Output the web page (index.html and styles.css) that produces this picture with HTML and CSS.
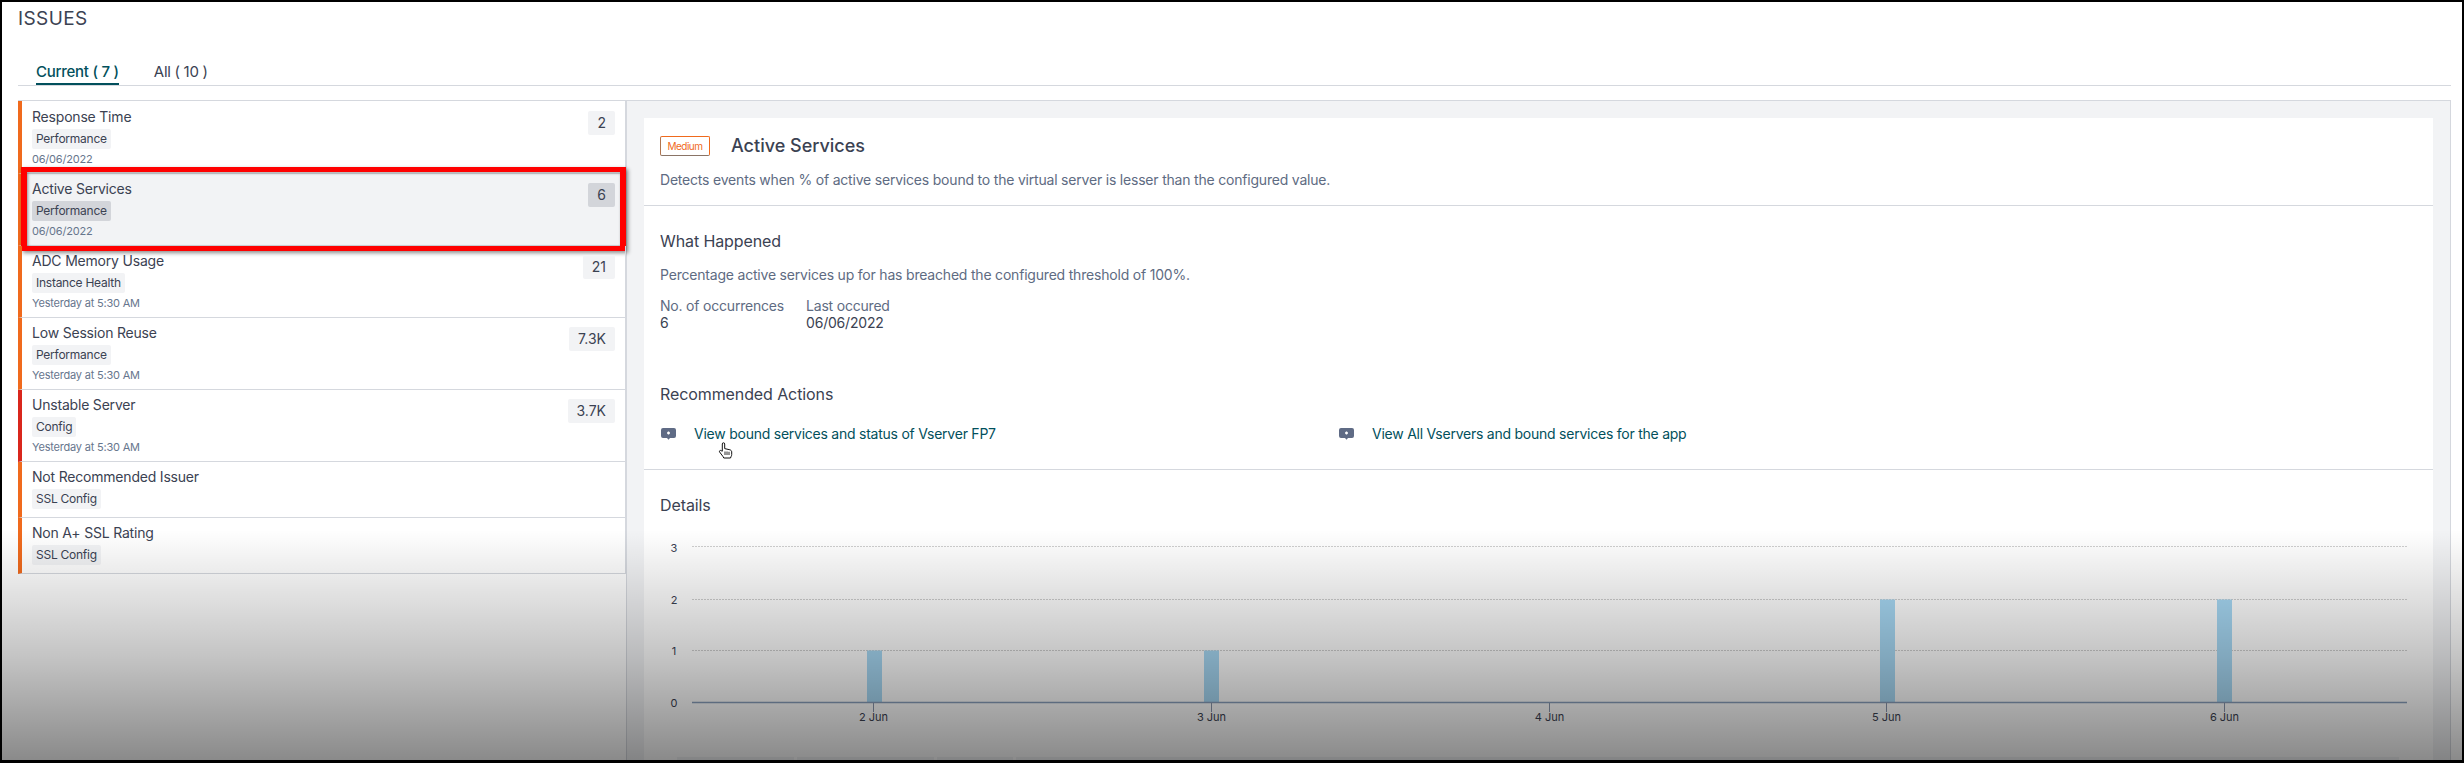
FILE: index.html
```html
<!DOCTYPE html>
<html lang="en">
<head>
  <meta charset="UTF-8" />
  <title>Issues</title>
  <link rel="stylesheet" href="styles.css">
</head>
<body>
  <div class="page">
    <h1 class="page-title">ISSUES</h1>

    <div class="tabs">
      <a class="tab tab-active">Current ( 7 )</a>
      <a class="tab">All ( 10 )</a>
    </div>

    <div class="content">
      <!-- issue list -->
      <ul class="issue-list">
        <li class="issue issue-orange">
          <div class="issue-text">
            <div class="issue-name">Response Time</div>
            <span class="tag">Performance</span>
            <div class="issue-date">06/06/2022</div>
          </div>
          <span class="count">2</span>
        </li>
        <li class="issue issue-orange issue-active">
          <div class="issue-text">
            <div class="issue-name">Active Services</div>
            <span class="tag">Performance</span>
            <div class="issue-date">06/06/2022</div>
          </div>
          <span class="count">6</span>
          <div class="callout"></div>
        </li>
        <li class="issue issue-orange">
          <div class="issue-text">
            <div class="issue-name">ADC Memory Usage</div>
            <span class="tag">Instance Health</span>
            <div class="issue-date">Yesterday at 5:30 AM</div>
          </div>
          <span class="count">21</span>
        </li>
        <li class="issue issue-orange">
          <div class="issue-text">
            <div class="issue-name">Low Session Reuse</div>
            <span class="tag">Performance</span>
            <div class="issue-date">Yesterday at 5:30 AM</div>
          </div>
          <span class="count">7.3K</span>
        </li>
        <li class="issue issue-red">
          <div class="issue-text">
            <div class="issue-name">Unstable Server</div>
            <span class="tag">Config</span>
            <div class="issue-date">Yesterday at 5:30 AM</div>
          </div>
          <span class="count">3.7K</span>
        </li>
        <li class="issue issue-orange issue-short">
          <div class="issue-text">
            <div class="issue-name">Not Recommended Issuer</div>
            <span class="tag">SSL Config</span>
          </div>
        </li>
        <li class="issue issue-orange issue-short">
          <div class="issue-text">
            <div class="issue-name">Non A+ SSL Rating</div>
            <span class="tag">SSL Config</span>
          </div>
        </li>
      </ul>

      <!-- detail panel -->
      <div class="panel">
        <div class="card">
          <section class="section section-head">
            <div class="head-row">
              <span class="severity">Medium</span>
              <h2 class="detail-title">Active Services</h2>
            </div>
            <p class="muted desc">Detects events when % of active services bound to the virtual server is lesser than the configured value.</p>
          </section>

          <section class="section section-body">
            <h3 class="section-title">What Happened</h3>
            <p class="muted happened">Percentage active services up for has breached the configured threshold of 100%.</p>
            <div class="facts">
              <div class="fact">
                <div class="fact-label">No. of occurrences</div>
                <div class="fact-value">6</div>
              </div>
              <div class="fact">
                <div class="fact-label">Last occured</div>
                <div class="fact-value">06/06/2022</div>
              </div>
            </div>

            <h3 class="section-title actions-title">Recommended Actions</h3>
            <div class="actions">
              <div class="action">
                <svg class="action-icon" viewBox="0 0 15 12"><path d="M2 0h11a2 2 0 0 1 2 2v6a2 2 0 0 1-2 2H9l-1.500 1.800L6 10H2a2 2 0 0 1-2-2V2a2 2 0 0 1 2-2z" fill="#5f6b85"/><path d="M6 5h3M7.500 3.500v3" stroke="#fff" stroke-width="1.300"/></svg>
                <a class="action-link">View bound services and status of Vserver FP7</a>
                <svg class="hand" viewBox="0 0 15 17">
                  <path d="M4.300 9.200V2a1.200 1.200 0 0 1 2.400 0v4.600l5.200 1.200c1.100.3 1.800 1.100 1.800 2.200v2.600c0 .8-.3 1.500-.7 2.100l-.5 1.300H5.800l-.9-1.600L1.600 10c-.7-1 .7-2.200 1.600-1.300z" fill="#fff" stroke="#111" stroke-width="1"/>
                  <path d="M7 9.500v3.500M9 9.500v3.500M11 9.800v3.200" stroke="#111" stroke-width=".9"/>
                </svg>
              </div>
              <div class="action">
                <svg class="action-icon" viewBox="0 0 15 12"><path d="M2 0h11a2 2 0 0 1 2 2v6a2 2 0 0 1-2 2H9l-1.500 1.800L6 10H2a2 2 0 0 1-2-2V2a2 2 0 0 1 2-2z" fill="#5f6b85"/><path d="M6 5h3M7.500 3.500v3" stroke="#fff" stroke-width="1.300"/></svg>
                <a class="action-link">View All Vservers and bound services for the app</a>
              </div>
            </div>
          </section>

          <section class="section section-details">
            <h3 class="section-title">Details</h3>
            <svg class="chart" viewBox="0 0 1757 190" width="1757" height="190">
              <g class="grid">
                <line x1="32" x2="1747" y1="6.500" y2="6.500"/>
                <line x1="32" x2="1747" y1="59.500" y2="59.500"/>
                <line x1="32" x2="1747" y1="110.500" y2="110.500"/>
              </g>
              <g class="bars">
                <rect x="207" y="110.500" width="15" height="52"/>
                <rect x="544" y="110.500" width="15" height="52"/>
                <rect x="1220" y="59.500" width="15" height="103"/>
                <rect x="1557" y="59.500" width="15" height="103"/>
              </g>
              <line class="axis" x1="32" x2="1747" y1="162.500" y2="162.500"/>
              <g class="ticks">
                <line x1="213.500" x2="213.500" y1="163" y2="172"/>
                <line x1="551.500" x2="551.500" y1="163" y2="172"/>
                <line x1="889.500" x2="889.500" y1="163" y2="172"/>
                <line x1="1226.500" x2="1226.500" y1="163" y2="172"/>
                <line x1="1564.500" x2="1564.500" y1="163" y2="172"/>
              </g>
              <g class="y-labels">
                <text x="14" y="12">3</text>
                <text x="14" y="64">2</text>
                <text x="14" y="115">1</text>
                <text x="14" y="167">0</text>
              </g>
              <g class="x-labels">
                <text x="213.500" y="181">2 Jun</text>
                <text x="551.500" y="181">3 Jun</text>
                <text x="889.500" y="181">4 Jun</text>
                <text x="1226.500" y="181">5 Jun</text>
                <text x="1564.500" y="181">6 Jun</text>
              </g>
            </svg>
            <div class="table-head">
              <span class="head-cell head-a"></span>
              <span class="head-cell head-b"></span>
              <span class="head-cell head-c"></span>
              <span class="head-cell head-d"></span>
            </div>
          </section>
        </div>
      </div>
    </div>
  </div>
  <div class="fade"></div>
</body>
</html>
```

FILE: styles.css
```css
* {
  box-sizing: border-box;
}
html, body {
  margin: 0;
  height: 763px;
  overflow: hidden;
}
body {
  position: relative;
  font-family: Inter, "Liberation Sans", sans-serif;
  color: #3b4252;
  background: #fff;
}
.page {
  height: 763px;
  border: 2px solid #000;
  border-bottom-width: 3px;
  background: #fff;
  display: flex;
  flex-direction: column;
  overflow: hidden;
}
.page-title {
  margin: 6px 0 0 16px;
  font-size: 19px;
  line-height: 22px;
  letter-spacing: 0.4px;
  font-weight: 400;
}

/* tabs */
.tabs {
  display: flex;
  gap: 35px;
  margin: 32px 11px 0 16px;
  padding-left: 18px;
  height: 24px;
  border-bottom: 1px solid #d5d8de;
}
.tab {
  font-size: 15px;
  line-height: 20px;
  height: 23px;
  letter-spacing: -0.3px;
  color: #3b4252;
}
.tab-active {
  color: #02505c;
  font-weight: 500;
  letter-spacing: -0.25px;
  border-bottom: 2px solid #02505c;
}

/* list + panel */
.content {
  display: flex;
  flex: 1;
  min-height: 0;
  margin: 14px 11px 0 16px;
}
.issue-list {
  list-style: none;
  margin: 0;
  padding: 0;
  width: 608px;
  flex: none;
  align-self: flex-start;
  border-top: 1px solid #d5d8de;
}
.issue {
  position: relative;
  display: flex;
  justify-content: space-between;
  height: 72px;
  padding: 5px 10px 0 10px;
  border-left: 4px solid #f06a1d;
  border-right: 1px solid #d5d8de;
  border-bottom: 1px solid #d5d8de;
}
.issue:first-child {
  height: 73px;
  padding-top: 6px;
}
.issue-red {
  border-left-color: #d9261c;
}
.issue-short {
  height: 56px;
}
.issue-active {
  background: #f2f3f5;
}
.issue-name {
  font-size: 14px;
  line-height: 20px;
  letter-spacing: -0.2px;
  color: #3b4252;
}
.tag {
  display: block;
  width: fit-content;
  margin-top: 2px;
  height: 20px;
  padding: 0 4px;
  font-size: 12px;
  line-height: 20px;
  letter-spacing: -0.25px;
  color: #3b4252;
  background: #f2f3f5;
  border-radius: 2px;
}
.issue-active .tag {
  background: #d3d5da;
}
.issue-date {
  margin-top: 2px;
  font-size: 11px;
  line-height: 16px;
  letter-spacing: -0.2px;
  color: #67768d;
}
.count {
  align-self: flex-start;
  margin-top: 4px;
  height: 24px;
  min-width: 25px;
  padding: 0 9px;
  font-size: 14px;
  line-height: 24px;
  text-align: center;
  background: #f2f3f5;
  border-radius: 2px;
}
.issue-active .count {
  background: #d3d5da;
}
/* red box drawn on top of the selected row */
.callout {
  position: absolute;
  left: -1px;
  right: -1px;
  top: -7px;
  bottom: -6px;
  border-style: solid;
  border-color: #f00;
  border-width: 5px 6px;
  box-shadow: 2px 2px 4px rgba(0, 0, 0, 0.45), inset 1px 1px 3px rgba(0, 0, 0, 0.4);
  pointer-events: none;
}

.panel {
  flex: 1;
  min-width: 0;
  display: flex;
  padding: 17px 17px 0 17px;
  background: #f2f3f5;
  border: 1px solid #d5d8de;
  border-bottom: 0;
}
.card {
  flex: 1;
  min-width: 0;
  background: #fff;
  overflow: hidden;
}
.section {
  padding: 0 16px;
  border-bottom: 1px solid #d5d8de;
}
.section-head {
  height: 88px;
  padding-top: 18px;
}
.head-row {
  display: flex;
  align-items: center;
}
.severity {
  width: 50px;
  height: 20px;
  border: 1px solid #f06a1d;
  border-bottom-color: #8a7466;
  border-left-color: #b0754f;
  border-radius: 2px;
  font-size: 10px;
  line-height: 18px;
  letter-spacing: -0.5px;
  text-align: center;
  color: #f06a1d;
}
.detail-title {
  margin: 0 0 0 21px;
  font-size: 18px;
  line-height: 20px;
  font-weight: 500;
  color: #3b4252;
}
.muted {
  margin: 0;
  font-size: 14px;
  line-height: 20px;
  letter-spacing: -0.2px;
  color: #5e6b82;
}
.desc {
  margin-top: 14px;
}
.section-body {
  height: 264px;
  padding-top: 25px;
}
.section-title {
  margin: 0;
  font-size: 16px;
  line-height: 20px;
  letter-spacing: -0.1px;
  font-weight: 400;
  color: #3b4252;
}
.happened {
  margin-top: 14px;
}
.facts {
  display: flex;
  gap: 22px;
  margin-top: 12px;
}
.fact-label {
  font-size: 14px;
  line-height: 17px;
  letter-spacing: -0.2px;
  color: #5e6b82;
}
.fact-value {
  font-size: 14px;
  line-height: 17px;
  letter-spacing: -0.2px;
  color: #3b4252;
}
.actions-title {
  margin-top: 53px;
}
.actions {
  display: flex;
  margin-top: 20px;
}
.action {
  position: relative;
  width: 678px;
  display: flex;
  align-items: center;
  gap: 18px;
  height: 20px;
}
.action-icon {
  width: 15px;
  height: 12px;
  margin-left: 1px;
  flex: none;
}
.action-link {
  font-size: 14px;
  line-height: 20px;
  letter-spacing: -0.24px;
  color: #02505c;
}
/* mouse pointer captured in the recording */
.hand {
  position: absolute;
  left: 58px;
  top: 18px;
  width: 15px;
  height: 17px;
}
.section-details {
  border-bottom: 0;
  padding-top: 25px;
}
.chart {
  display: block;
  margin-top: 25px;
}
.grid line {
  stroke: #cfcfcf;
  stroke-width: 1;
  stroke-dasharray: 2 1;
}
.bars rect {
  fill: #a8daf6;
}
.axis {
  stroke: #8aa0bd;
  stroke-width: 1.5;
}
.ticks line {
  stroke: #8a97ad;
  stroke-width: 1;
}
.y-labels text, .x-labels text {
  font-size: 11px;
  fill: #3b4252;
  text-anchor: middle;
}
.table-head {
  display: flex;
  gap: 3px;
  margin: 27px 0 0 17px;
  height: 20px;
}
.head-cell {
  background: #f2f3f5;
}
.head-a { width: 117px; }
.head-b { width: 137px; }
.head-c { width: 76px; }
.head-d { width: 1383px; }

/* darkening at the bottom edge of the recording */
.fade {
  position: absolute;
  left: 2px;
  right: 2px;
  top: 530px;
  bottom: 3px;
  background: linear-gradient(to bottom, rgba(0, 0, 0, 0), rgba(0, 0, 0, 0.23) 55%, rgba(0, 0, 0, 0.46));
  pointer-events: none;
}
```
